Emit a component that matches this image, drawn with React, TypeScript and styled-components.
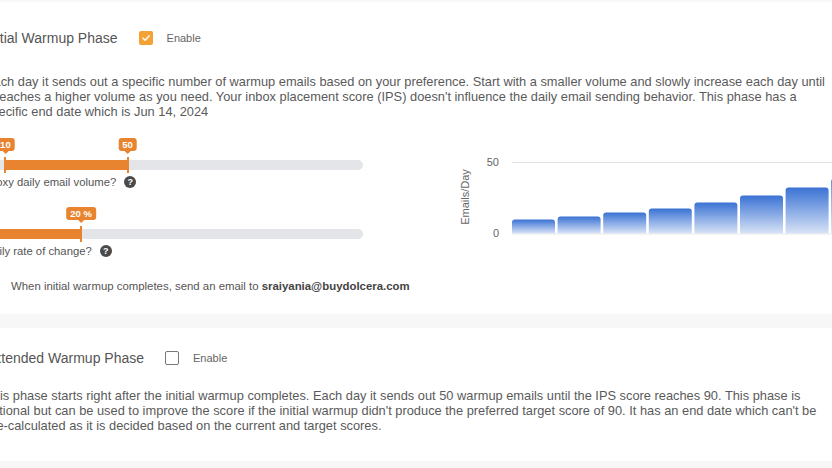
import React from 'react';
import styled, { createGlobalStyle } from 'styled-components';

const GlobalStyle = createGlobalStyle`
  html, body {
    margin: 0;
    padding: 0;
    background: #fff;
    overflow: hidden;
  }
  body {
    font-family: "Liberation Sans", Arial, Helvetica, sans-serif;
    color: #555;
  }
`;

const ORANGE = '#e8842f';

const Page = styled.div`
  width: 900px;
  margin-left: -15px;
`;

const Band = styled.div<{ $h: number }>`
  height: ${(p) => p.$h}px;
  background: #f7f7f7;
  margin-left: -40px;
`;

const Section = styled.section<{ $top: number; $bottom: number }>`
  padding-top: ${(p) => p.$top}px;
  padding-bottom: ${(p) => p.$bottom}px;
`;

const Header = styled.div`
  display: flex;
  align-items: center;
  gap: 21px;
  height: 18px;
`;

const Title = styled.h2`
  margin: 0;
  font-size: 14px;
  font-weight: 400;
  line-height: 18px;
  color: #555;
`;

const CheckLabel = styled.label`
  display: flex;
  align-items: center;
  gap: 14px;
  font-size: 11px;
  color: #666;
`;

const Box = styled.span<{ $on: boolean }>`
  width: 14px;
  height: 14px;
  box-sizing: border-box;
  border-radius: 2px;
  display: flex;
  align-items: center;
  justify-content: center;
  background: ${(p) => (p.$on ? '#f4a236' : '#fff')};
  border: ${(p) => (p.$on ? 'none' : '1.5px solid #777')};
`;

const Para = styled.p<{ $top: number }>`
  margin: ${(p) => p.$top}px 0 0;
  width: 843px;
  font-size: 12.83px;
  line-height: 15px;
  color: #5a5a5a;
`;

const Body = styled.div`
  display: flex;
  gap: 92px;
  margin-top: 18px;
`;

const Sliders = styled.div`
  width: 378px;
  display: flex;
  flex-direction: column;
  gap: 17px;
`;

const SliderBlock = styled.div`
  display: flex;
  flex-direction: column;
  padding-top: 23px;
`;

const Track = styled.div`
  position: relative;
  height: 10px;
  border-radius: 5px;
  background: #e4e5e8;
`;

const Fill = styled.div`
  position: absolute;
  top: 0;
  bottom: 0;
  background: ${ORANGE};
`;

const Handle = styled.div`
  position: absolute;
  top: -3px;
  width: 2px;
  height: 16px;
  margin-left: -1px;
  background: ${ORANGE};
`;

const Tip = styled.div`
  position: absolute;
  bottom: 19px;
  transform: translateX(-50%);
  background: ${ORANGE};
  color: #fff;
  font-size: 9.5px;
  font-weight: 700;
  line-height: 13px;
  padding: 0 4px;
  border-radius: 3px;
  white-space: nowrap;
  &::after {
    content: '';
    position: absolute;
    left: 50%;
    bottom: -3px;
    margin-left: -3px;
    border-left: 3px solid transparent;
    border-right: 3px solid transparent;
    border-top: 3px solid ${ORANGE};
  }
`;

const Question = styled.div`
  display: flex;
  align-items: center;
  gap: 8px;
  margin-top: 5px;
  font-size: 11.3px;
  line-height: 14px;
  color: #555;
`;

const Help = styled.span`
  width: 12px;
  height: 12px;
  border-radius: 50%;
  background: #4a4a4a;
  color: #fff;
  font-size: 9px;
  font-weight: 700;
  line-height: 12px;
  text-align: center;
`;

const Notice = styled.div`
  margin: 21px 0 0 26px;
  font-size: 11.4px;
  line-height: 14px;
  color: #555;
  b {
    color: #444;
  }
`;

const ChartWrap = styled.div`
  flex: none;
`;

type SliderProps = {
  from: number;
  to: number;
  handles: { at: number; label: string }[];
  question: string;
};

const Slider = ({ from, to, handles, question }: SliderProps) => (
  <SliderBlock>
    <Track>
      <Fill style={{ left: `${from}%`, width: `${to - from}%` }} />
      {handles.map((h) => (
        <React.Fragment key={h.label}>
          <Handle style={{ left: `${h.at}%` }} />
          <Tip style={{ left: `${h.at}%` }}>{h.label}</Tip>
        </React.Fragment>
      ))}
    </Track>
    <Question>
      {question}
      <Help>?</Help>
    </Question>
  </SliderBlock>
);

const bars = [14, 17, 21, 25, 31, 38, 46, 55];

const Chart = () => (
  <svg width="400" height="110" viewBox="0 0 400 110">
    <defs>
      <linearGradient id="barGrad" x1="0" y1="0" x2="0" y2="1">
        <stop offset="0" stopColor="#3a72d4" />
        <stop offset="1" stopColor="#d8e3f6" />
      </linearGradient>
    </defs>
    <line x1="57" y1="25.5" x2="400" y2="25.5" stroke="#e2e2e2" strokeWidth="1" />
    <line x1="57" y1="97" x2="400" y2="97" stroke="#e8e8e8" strokeWidth="1" />
    <text x="44" y="29" textAnchor="end" fontSize="11" fill="#666" fontFamily="Liberation Sans, Arial, sans-serif">50</text>
    <text x="44" y="100" textAnchor="end" fontSize="11" fill="#666" fontFamily="Liberation Sans, Arial, sans-serif">0</text>
    <text
      x="0"
      y="0"
      transform="translate(14 60) rotate(-90)"
      textAnchor="middle"
      fontSize="11"
      fill="#666"
      fontFamily="Liberation Sans, Arial, sans-serif"
    >
      Emails/Day
    </text>
    {bars.map((h, i) => {
      const x = 57 + i * 45.6;
      const y = 96.5 - h;
      return (
        <path
          key={i}
          d={`M${x} 96.5 V${y + 3} Q${x} ${y} ${x + 3} ${y} H${x + 40} Q${x + 43} ${y} ${x + 43} ${y + 3} V96.5 Z`}
          fill="url(#barGrad)"
        />
      );
    })}
  </svg>
);

const Check = ({ on }: { on: boolean }) => (
  <CheckLabel>
    <Box $on={on}>
      {on && (
        <svg width="10" height="10" viewBox="0 0 10 10">
          <path d="M2 5.2 L4.2 7.3 L8.2 2.8" stroke="#fff" strokeWidth="1.4" fill="none" strokeLinecap="round" strokeLinejoin="round" />
        </svg>
      )}
    </Box>
    Enable
  </CheckLabel>
);

const App = () => (
  <>
    <GlobalStyle />
    <Page>
      <Band $h={2} />
      <Section $top={27} $bottom={21}>
        <Header>
          <Title>Initial Warmup Phase</Title>
          <Check on />
        </Header>
        <Para $top={27}>
          Each day it sends out a specific number of warmup emails based on your preference. Start with a
          smaller volume and slowly increase each day until it reaches a higher volume as you need. Your inbox
          placement score (IPS) doesn't influence the daily email sending behavior. This phase has a specific
          end date which is Jun 14, 2024
        </Para>
        <Body>
          <Sliders>
            <Slider
              from={5.4}
              to={37.7}
              handles={[
                { at: 5.4, label: '10' },
                { at: 37.7, label: '50' },
              ]}
              question="Proxy daily email volume?"
            />
            <Slider
              from={0}
              to={25.4}
              handles={[{ at: 25.4, label: '20 %' }]}
              question="Daily rate of change?"
            />
          </Sliders>
          <ChartWrap>
            <Chart />
          </ChartWrap>
        </Body>
        <Notice>
          When initial warmup completes, send an email to <b>sraiyania@buydolcera.com</b>
        </Notice>
      </Section>
      <Band $h={14} />
      <Section $top={21} $bottom={28}>
        <Header>
          <Title>Extended Warmup Phase</Title>
          <Check on={false} />
        </Header>
        <Para $top={21}>
          This phase starts right after the initial warmup completes. Each day it sends out 50 warmup emails
          until the IPS score reaches 90. This phase is optional but can be used to improve the score if the
          initial warmup didn't produce the preferred target score of 90. It has an end date which can't be
          pre-calculated as it is decided based on the current and target scores.
        </Para>
      </Section>
      <Band $h={20} />
    </Page>
  </>
);

export default App;
